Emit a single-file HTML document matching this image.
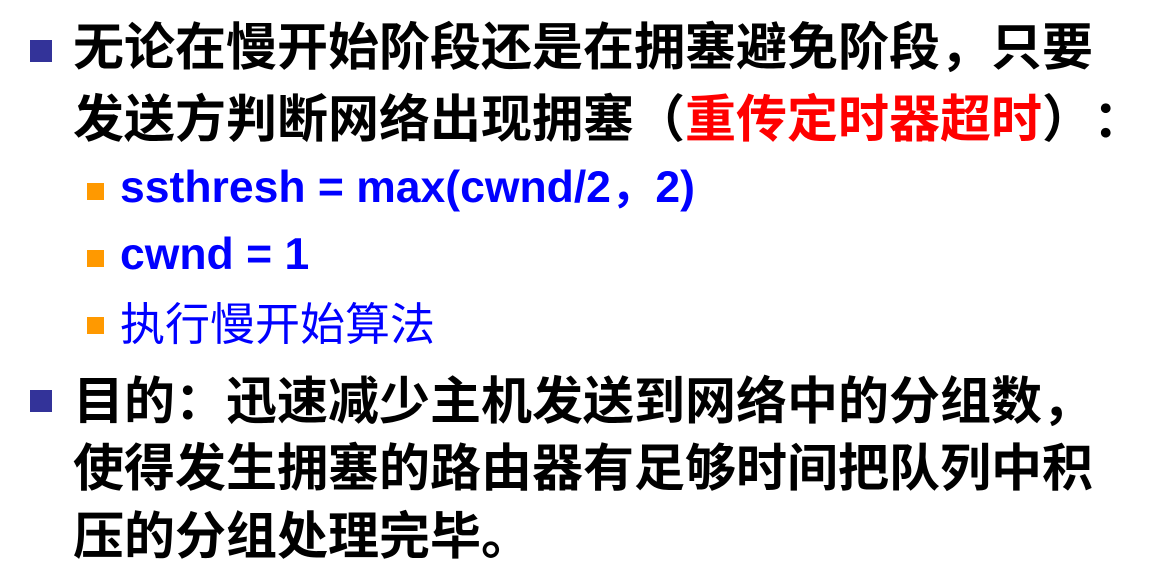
<!DOCTYPE html>
<html><head><meta charset="utf-8"><style>
body{margin:0;width:1164px;height:583px;background:#fff;position:relative;overflow:hidden}
.l{position:absolute;white-space:nowrap;font-family:"Liberation Sans","Noto Sans CJK SC",sans-serif}
.m{left:73px;font-size:51px;line-height:66px;font-weight:bold;color:#000}
.s{left:120px;font-size:44.5px;line-height:44px;font-weight:bold;color:#0000ff}
.b1{position:absolute;left:30px;width:22px;height:22px;background:#333399}
.b2{position:absolute;left:87px;width:17px;height:17px;background:#ff9900}
.r{color:#ff0000}
.c{font-family:"Noto Sans CJK SC",sans-serif;display:inline-block;width:51px;text-align:center}
</style></head><body>
<div class="b1" style="top:40px"></div>
<div class="l m" style="top:15px">无论在慢开始阶段还是在拥塞避免阶段，只要</div>
<div class="l m" style="top:82px">发送方判断网络出现拥塞<span class="c" style="text-align:right">（</span><span class="r">重传定时器超时</span><span class="c" style="text-align:left">）</span><span class="c">：</span></div>
<div class="b2" style="top:183px"></div>
<div class="l s" style="top:166px">ssthresh = max(cwnd/2，2)</div>
<div class="b2" style="top:250px"></div>
<div class="l s" style="top:233px">cwnd = 1</div>
<div class="b2" style="top:317px"></div>
<div class="l s" style="top:303px;font-weight:normal;font-size:45px">执行慢开始算法</div>
<div class="b1" style="top:390px"></div>
<div class="l m" style="top:369px">目的：迅速减少主机发送到网络中的分组数，</div>
<div class="l m" style="top:436px">使得发生拥塞的路由器有足够时间把队列中积</div>
<div class="l m" style="top:504px">压的分组处理完毕。</div>
</body></html>
